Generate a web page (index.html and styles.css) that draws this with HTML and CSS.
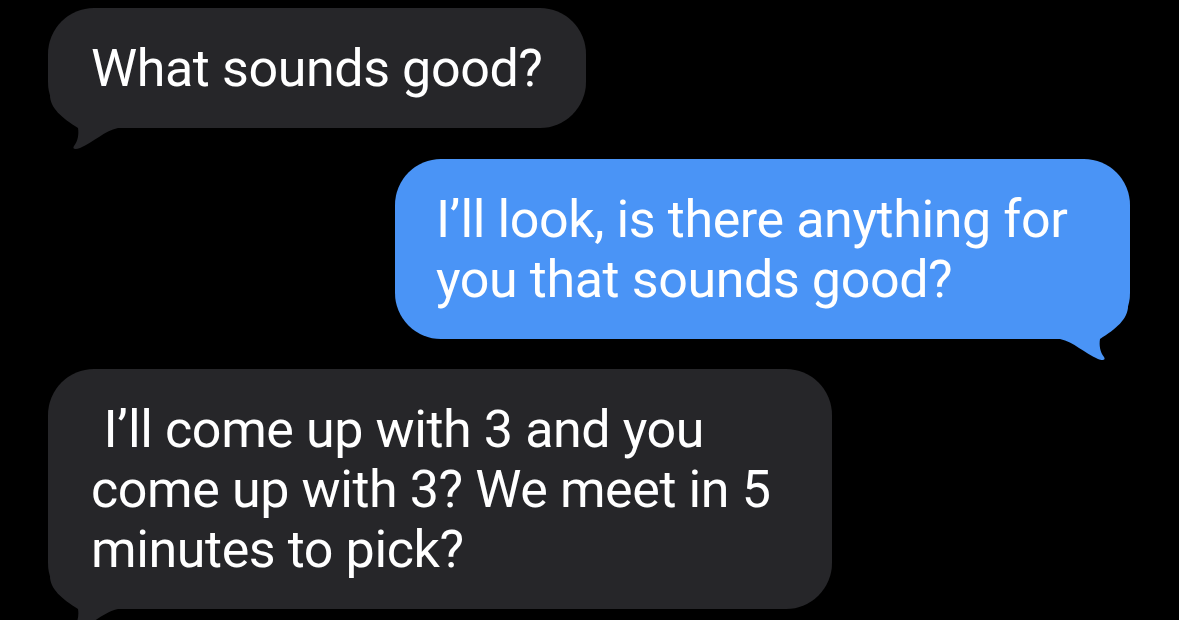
FILE: index.html
```html
<!DOCTYPE html>
<html lang="en">
<head>
<meta charset="utf-8">
<title>Messages</title>
<link rel="stylesheet" href="styles.css">
</head>
<body>
<main class="thread">
  <div class="bubble received b1">
    <p class="text">What sounds good?</p>
    <svg class="tail" viewBox="0 0 84 64" width="84" height="64" aria-hidden="true"><path d="M2 7 C2 20 14 30 30 40 C31 46 30 53 26 58 C24 61 27 62 32 60 C46 54 56 43 70 40 L84 40 L84 7 Z" fill="currentColor"/></svg>
  </div>
  <div class="bubble sent b2">
    <p class="text">I’ll look, is there anything for<br>you that sounds good?</p>
    <svg class="tail tail-right" viewBox="0 0 84 64" width="84" height="64" aria-hidden="true"><path d="M2 7 C2 20 14 30 30 40 C31 46 30 53 26 58 C24 61 27 62 32 60 C46 54 56 43 70 40 L84 40 L84 7 Z" fill="currentColor"/></svg>
  </div>
  <div class="bubble received b3">
    <p class="text">&nbsp;I’ll come up with 3 and you<br>come up with 3? We meet in 5<br>minutes to pick?</p>
    <svg class="tail" viewBox="0 0 84 64" width="84" height="64" aria-hidden="true"><path d="M2 7 C2 20 14 30 30 40 C31 46 30 53 26 58 C24 61 27 62 32 60 C46 54 56 43 70 40 L84 40 L84 7 Z" fill="currentColor"/></svg>
  </div>
</main>
</body>
</html>
```
FILE: styles.css
```css
html, body {
  margin: 0;
  padding: 0;
  background: #000;
  height: 100%;
  overflow: hidden;
}

.thread {
  display: flex;
  flex-direction: column;
  align-items: flex-start;
  gap: 30px;
  padding: 8px 49px 0 48px;
  font-family: Roboto, "Noto Sans", sans-serif;
}

.bubble {
  position: relative;
  box-sizing: border-box;
  padding: 31px 43px 29px;
  border-radius: 46px;
}

.text {
  position: relative;
  z-index: 1;
  margin: 0;
  font-size: 52px;
  line-height: 60px;
  letter-spacing: -0.4px;
  color: #fff;
  white-space: nowrap;
}

.received {
  background: #262629;
  color: #262629;
}

.sent {
  background: #4a94f6;
  color: #4a94f6;
  align-self: flex-end;
  padding-left: 41px;
}

.b1 { width: 538px; }
.b2 { width: 735px; margin-top: 1px; }
.b3 { width: 784px; }

.tail {
  position: absolute;
  left: 0;
  bottom: -24px;
  display: block;
}

.tail-right {
  left: auto;
  right: 0;
  transform: scaleX(-1);
}
```
